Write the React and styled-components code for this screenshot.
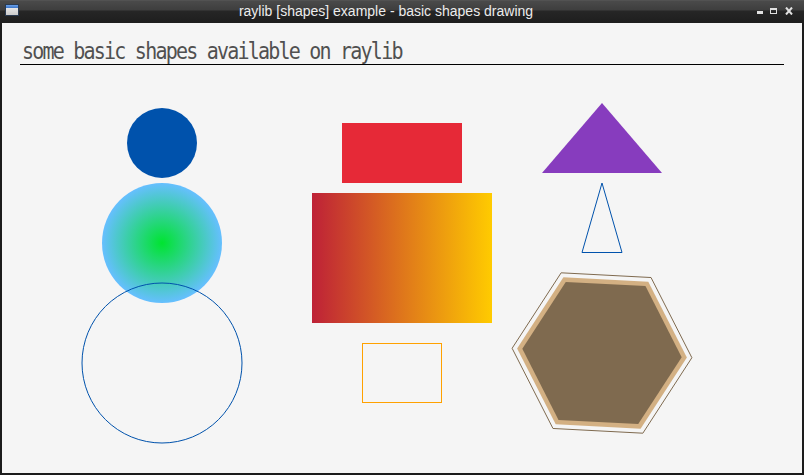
import React from 'react';
import styled, { createGlobalStyle } from 'styled-components';

const GlobalStyle = createGlobalStyle`
  html, body {
    margin: 0;
    padding: 0;
    background: #1c1c1c;
  }
`;

const Window = styled.div`
  width: 804px;
  height: 475px;
  display: flex;
  flex-direction: column;
  background: #1c1c1c;
  overflow: hidden;
`;

const TitleBar = styled.div`
  height: 23px;
  display: flex;
  align-items: stretch;
  background: linear-gradient(#5a5a5a 0px, #4a4a4a 1px, #3e3e3e 10px, #262626 11px, #1e1e1e 23px);
`;

const IconSlot = styled.div`
  width: 22px;
  display: flex;
  align-items: flex-start;
  padding: 4px 0 0 5px;
  box-sizing: border-box;
`;

const AppIcon = styled.div`
  width: 14px;
  height: 12px;
  box-sizing: border-box;
  border: 1px solid #2a3a50;
  background: linear-gradient(#6aa0e8 0px, #3a74c8 3px, #e6e6e6 3px, #c4c4c4 12px);
`;

const Title = styled.div`
  flex: 1;
  text-align: center;
  font-family: 'Liberation Sans', Arial, sans-serif;
  font-size: 14px;
  line-height: 23px;
  color: #ececec;
  white-space: nowrap;
`;

const Controls = styled.div`
  width: 54px;
  display: flex;
  align-items: flex-start;
  gap: 6px;
  padding: 7px 0 0 6px;
  box-sizing: border-box;
`;

const ControlIcon = styled.svg`
  width: 11px;
  height: 8px;
  display: block;
  margin-left: ${p => p.$shift || 0}px;
`;

const Frame = styled.div`
  flex: 1;
  padding: 0 2px 2px 2px;
  display: flex;
`;

const Canvas = styled.div`
  width: 800px;
  height: 450px;
  background: #f5f5f5;
  display: flex;
  flex-direction: column;
`;

const Header = styled.div`
  margin: 0 18px;
  height: 41px;
  box-sizing: content-box;
  border-bottom: 1px solid #000;
  padding-left: 2px;
`;

const Heading = styled.div`
  padding-top: 19px;
  font-family: 'DejaVu Sans Mono', 'Liberation Mono', monospace;
  font-size: 20px;
  line-height: 20px;
  letter-spacing: -1.78px;
  color: #505050;
  white-space: nowrap;
  transform: scaleY(1.12);
  transform-origin: 0 36px;
`;

const Drawing = styled.svg`
  display: block;
  flex: 1;
  width: 800px;
`;

const hexagon = (cx, cy, r, rot) =>
  Array.from({ length: 6 }, (_, i) => {
    const a = ((rot + i * 60) * Math.PI) / 180;
    return `${(cx + Math.cos(a) * r).toFixed(2)},${(cy + Math.sin(a) * r).toFixed(2)}`;
  }).join(' ');

const rotation = 3;

const App = () => (
  <Window>
    <GlobalStyle />
    <TitleBar>
      <IconSlot>
        <AppIcon />
      </IconSlot>
      <Title>raylib [shapes] example - basic shapes drawing</Title>
      <Controls>
        <ControlIcon viewBox="0 0 11 8">
          <rect x="1" y="4" width="6" height="3" fill="#e0e0e0" />
        </ControlIcon>
        <ControlIcon viewBox="0 0 11 8" $shift={-4}>
          <rect x="1.5" y="1.5" width="6" height="5" fill="none" stroke="#e0e0e0" strokeWidth="1" />
          <rect x="1" y="1" width="7" height="2" fill="#e0e0e0" />
        </ControlIcon>
        <ControlIcon viewBox="0 0 11 8" $shift={-1}>
          <path d="M1 0.5 L7 7.5 M7 0.5 L1 7.5" stroke="#e0e0e0" strokeWidth="2" />
        </ControlIcon>
      </Controls>
    </TitleBar>
    <Frame>
      <Canvas>
        <Header>
          <Heading>some basic shapes available on raylib</Heading>
        </Header>
        <Drawing viewBox="0 42 800 408">
          <defs>
            <radialGradient id="circleGrad" cx="0.5" cy="0.5" r="0.5">
              <stop offset="0" stopColor="#00e430" />
              <stop offset="1" stopColor="#66bfff" />
            </radialGradient>
            <linearGradient id="rectGrad" x1="0" y1="0" x2="1" y2="0">
              <stop offset="0" stopColor="#be2137" />
              <stop offset="1" stopColor="#ffcb00" />
            </linearGradient>
          </defs>

          <circle cx="160" cy="120" r="35" fill="#0052ac" />
          <circle cx="160" cy="220" r="60" fill="url(#circleGrad)" />
          <circle cx="160" cy="340" r="80" fill="none" stroke="#0052ac" strokeWidth="1" />

          <rect x="340" y="100" width="120" height="60" fill="#e62937" />
          <rect x="310" y="170" width="180" height="130" fill="url(#rectGrad)" />
          <rect x="360.5" y="320.5" width="79" height="59" fill="none" stroke="#ffa100" strokeWidth="1" />

          <polygon points="600,80 540,150 660,150" fill="#873cbe" />
          <polygon points="600,160 580,229.5 620,229.5" fill="none" stroke="#0052ac" strokeWidth="1" />

          <polygon points={hexagon(600, 330, 85, rotation)} fill="#d3b083" />
          <polygon points={hexagon(600, 330, 79.8, rotation)} fill="#7f6a4f" />
          <polygon points={hexagon(600, 330, 90, rotation)} fill="none" stroke="#7f6a4f" strokeWidth="1" />
        </Drawing>
      </Canvas>
    </Frame>
  </Window>
);

export default App;
